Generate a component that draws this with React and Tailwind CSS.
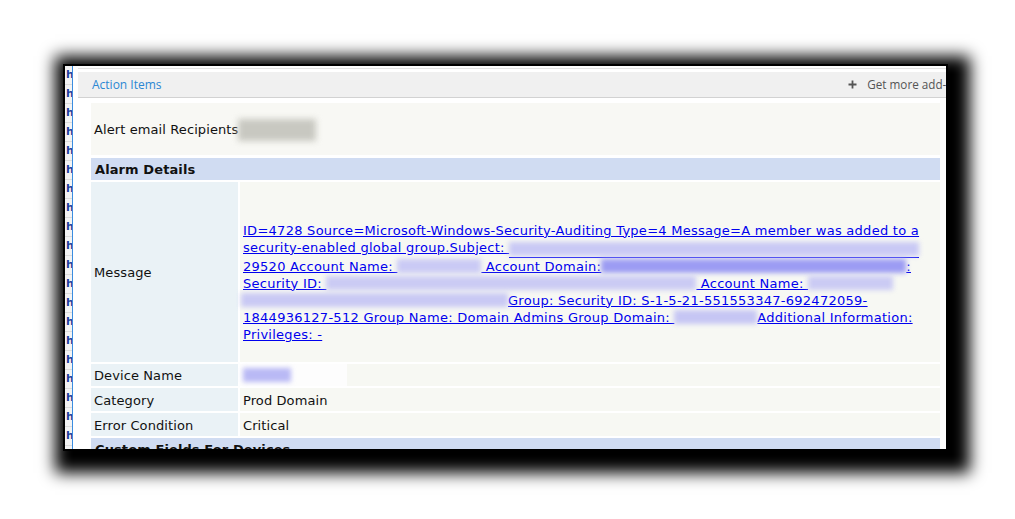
import React from "react";

function Blur({ cls }) {
  return <span className={"inline-block align-[-2px] h-[14px] blur-[2.5px] " + cls} />;
}

function UBlur({ cls }) {
  return (
    <span className={"inline-flex flex-col align-[-4px] " + cls}>
      <span className="h-[14px] bg-[#c9c9f5] blur-[2.5px]" />
      <span className="h-px mt-[1px] bg-[#0000ee]" />
    </span>
  );
}

function Row({ label, children, h = "h-[22px]" }) {
  return (
    <div className={"flex gap-[2px] shrink-0 " + h}>
      <div className="w-[147px] shrink-0 bg-[#eaf2f6] pl-[3px] pt-[2px] flex items-center">{label}</div>
      <div className="flex-1 bg-[#f7f8f3] pl-[3px] flex items-center min-w-0">{children}</div>
    </div>
  );
}

export default function App() {
  const hs = Array.from({ length: 20 });
  return (
    <div className="w-[1015px] h-[519px] bg-white overflow-hidden pt-[64px] pl-[63px]">
      <div className="w-[885px] h-[387px] border-2 border-black bg-white shadow-[7px_7px_15px_15px_#000] flex overflow-hidden">
        {/* left strip */}
        <div className="w-[8px] shrink-0 bg-[#f3f3f3] border-r border-[#3b8de0] flex flex-col overflow-hidden">
          {hs.map((_, i) => (
            <div
              key={i}
              className="h-[19px] shrink-0 border-b border-[#dcdcdc] text-[11px] font-bold text-[#1d3c9c] leading-[18px] font-['DejaVu_Sans',sans-serif] whitespace-nowrap pl-[1px]"
            >
              h
            </div>
          ))}
        </div>
        <div className="w-[5px] shrink-0" />
        {/* main pane */}
        <div className="flex-1 flex flex-col min-w-0">
          <div className="h-[6px] shrink-0 pt-[2px]">
            <div className="h-px bg-[#e4e4e4]" />
          </div>
          <div className="h-[26px] shrink-0 bg-[#f0f0f0] border-b border-[#d2d2d2] flex items-center overflow-hidden font-['Open_Sans',sans-serif] text-[12px]">
            <span className="pl-[14px] text-[#2b87d3]">Action Items</span>
            <span className="ml-auto shrink-0 flex items-center gap-[10px] mr-[-16px] text-[11.7px] text-[#555]">
              <svg width="9" height="9" viewBox="0 0 9 9">
                <path d="M4.5 0.5v8M0.5 4.5h8" stroke="#555" strokeWidth="1.8" />
              </svg>
              <span>Get more add-ins</span>
            </span>
          </div>
          <div className="flex-1 min-h-0 pl-[13px] pr-[6px] pt-[5px] flex flex-col font-['DejaVu_Sans',sans-serif] text-[13px] tracking-[0.1px] text-[#111]">
            <div className="h-[52px] shrink-0 bg-[#f8f8f4] pl-[3px] pt-[2px] flex items-center mb-[3px]">
              <span>Alert email Recipients</span>
              <span className="inline-block w-[78px] h-[22px] bg-[#c8c8c1] blur-[3px]" />
            </div>
            <div className="flex flex-col gap-[2px]">
              <div className="h-[22px] shrink-0 bg-[#d0dcf2] pl-[4px] pt-[2px] flex items-center font-bold">Alarm Details</div>
              <Row label="Message" h="h-[180px]">
                <div className="mt-[20px] text-[#0000ee] underline leading-[17px] whitespace-nowrap tracking-[0.27px]">
                  <div>ID=4728 Source=Microsoft-Windows-Security-Auditing Type=4 Message=A member was added to a</div>
                  <div>
                    security-enabled global group.Subject: <UBlur cls="w-[410px]" />
                  </div>
                  <div>
                    29520 Account Name: <Blur cls="w-[84px] bg-[#cacaf5]" /> Account Domain:
                    <Blur cls="w-[305px] bg-[#9c9cf3]" />:
                  </div>
                  <div>
                    Security ID: <Blur cls="w-[370px] bg-[#cbcbf4]" /> Account Name: <Blur cls="w-[85px] bg-[#cbcbf4]" />
                  </div>
                  <div>
                    <Blur cls="w-[267px] bg-[#c9c9f4] ml-[-2px]" />Group: Security ID: S-1-5-21-551553347-692472059-
                  </div>
                  <div>
                    1844936127-512 Group Name: Domain Admins Group Domain: <Blur cls="w-[83px] bg-[#c6c6f4]" />Additional Information:
                  </div>
                  <div>Privileges: -</div>
                </div>
              </Row>
              <Row label="Device Name">
                <span className="inline-flex items-center w-[107px] h-[22px] ml-[-3px] bg-[#fdfdfd] pl-[3px]">
                  <Blur cls="w-[48px] bg-[#b9b9f5]" />
                </span>
              </Row>
              <Row label="Category" h="h-[23px]">
                <span className="pt-[2px]">Prod Domain</span>
              </Row>
              <Row label="Error Condition" h="h-[23px]">
                <span className="pt-[2px]">Critical</span>
              </Row>
              <div className="h-[22px] shrink-0 bg-[#d0dcf2] pl-[4px] pt-[2px] flex items-center font-bold">Custom Fields For Devices</div>
            </div>
          </div>
        </div>
      </div>
    </div>
  );
}
